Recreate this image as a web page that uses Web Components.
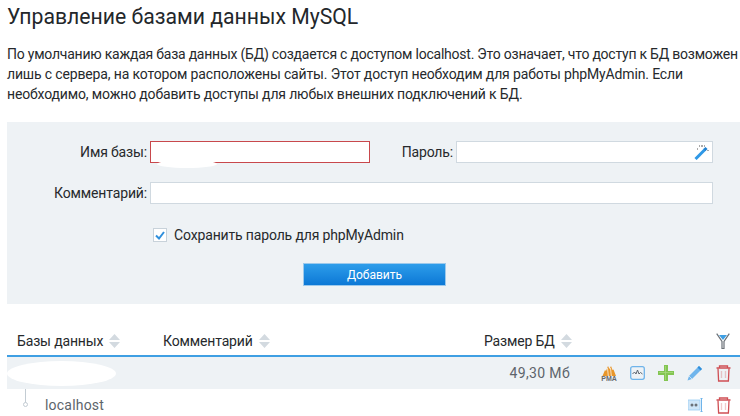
<!DOCTYPE html>
<html lang="ru">
<head>
<meta charset="utf-8">
<title>MySQL</title>
<style>
  html, body { margin: 0; padding: 0; background: #fff; overflow: hidden; }
  body { width: 740px; height: 416px; font: 14px/20px Roboto, "Noto Sans", sans-serif; letter-spacing: -0.15px; color: #26292c; }
  .tight { letter-spacing: -0.23px; }
</style>
</head>
<body>
<mysql-page>
  <page-intro heading="Управление базами данных MySQL"><span class="tight">По умолчанию каждая база данных (БД) создается с доступом localhost. Это означает, что доступ к БД возможен</span><br>лишь с сервера, на котором расположены сайты. Этот доступ необходим для работы phpMyAdmin. Если<br>необходимо, можно добавить доступы для любых внешних подключений к БД.</page-intro>
  <db-form></db-form>
  <db-table></db-table>
</mysql-page>

<script>
const TRASH = `<svg width="15" height="17" viewBox="0 0 15 17" fill="none" stroke="#cf4f54" stroke-width="1.300"><path d="M.5 3h14M3.500 3V1h8v2"/><path d="M2 3.500l.6 12.500h9.800l.6-12.500"/><path d="M5.500 6v7M9.500 6v7" stroke-opacity=".3"/></svg>`

const ICONS = {
  pma: `<svg width="16" height="15" viewBox="0 0 16 15"><path d="M1.500 10L4 4l1 1 2-5 1.500 3L10 0l1.500 4 1-.5L15 10z" fill="#e8962a"/><path d="M6.500 2l.8 8M9.500 2l.8 8" stroke="#fff" stroke-width=".7"/><text x="8" y="15" text-anchor="middle" font-family="Liberation Sans, sans-serif" font-size="7" font-weight="700" letter-spacing="0" fill="#66686b">PMA</text></svg>`,
  chart: `<svg width="15" height="14" viewBox="0 0 15 14" fill="none"><rect x=".7" y=".7" width="13.600" height="12.600" rx="2" stroke="#6fb4ea" stroke-width="1.300"/><path d="M2.500 8l2-2 1.500 2 1.500-4 1.500 4 1.500-1.500 2 1.500" stroke="#5d6670"/></svg>`,
  plus: `<svg width="16" height="16" viewBox="0 0 16 16"><path d="M6 0h4v6h6v4h-6v6H6v-6H0V6h6z" fill="#83c552"/><path d="M7.500 1v14M1 7.500h14" stroke="#a6d97e" stroke-width=".8"/></svg>`,
  pencil: `<svg width="16" height="16" viewBox="0 0 16 16"><path d="M12 1l3 3L5 14l-4.500 1.500L2 11z" fill="#70b5ec"/><path d="M12 1l3 3-1.500 1.500-3-3z" fill="#2f8fdc"/><path d="M2 11l3 3" stroke="#c4e0f6"/></svg>`,
  trash: TRASH,
  access: `<svg width="15" height="14" viewBox="0 0 15 14"><rect x="0" y="2" width="12" height="10" fill="#cfe6f8" stroke="#9bcdf2" stroke-width=".8"/><circle cx="4" cy="7" r="1.500" fill="#6b7178"/><circle cx="8" cy="7" r="1.500" fill="#6b7178"/><path d="M13.500 0v14M12.500 .5h2M12.500 13.500h2" stroke="#6fb4ea"/></svg>`
}

class MysqlPage extends HTMLElement {
  constructor() {
    super()
    this.attachShadow({ mode: 'open' })
    this.shadowRoot.innerHTML = `
      <style>
        :host { display: flex; flex-direction: column; width: 740px; height: 416px; overflow: hidden; }
        ::slotted(*) { flex: none; }
      </style>
      <slot></slot>`
  }
}

class PageIntro extends HTMLElement {
  constructor() {
    super()
    this.attachShadow({ mode: 'open' })
    this.shadowRoot.innerHTML = `
      <style>
        :host { display: block; padding: 2px 0 0 7px; height: 122px; box-sizing: border-box; }
        h1 { margin: 0 0 12px; font: 400 21.2px/30px Roboto, sans-serif; letter-spacing: 0; color: #23272b; white-space: nowrap; }
        p { margin: 0; font-size: 14px; line-height: 20px; white-space: nowrap; }
      </style>
      <h1>${this.getAttribute('heading')}</h1>
      <p><slot></slot></p>`
  }
}

class DbForm extends HTMLElement {
  constructor() {
    super()
    this.attachShadow({ mode: 'open' })
    this.shadowRoot.innerHTML = `
      <style>
        :host { display: block; margin-left: 7px; height: 182px; background: #eef2f5; padding-top: 19px; box-sizing: border-box; position: relative; }
        .grid { display: grid; grid-template-columns: 140px 220px 80px 257px; column-gap: 3px; row-gap: 19px; grid-auto-rows: 22px; align-items: center; width: 706px; }
        label { text-align: right; white-space: nowrap; }
        .input { height: 22px; box-sizing: border-box; background: #fff; border: 1px solid #d0d9e0; display: flex; justify-content: flex-end; align-items: center; padding-right: 2px; }
        .error { border-color: #c8484c; }
        .wide { grid-column: 2 / 5; }
        .check { display: flex; align-items: center; gap: 7px; margin: 24px 0 0 146px; height: 14px; }
        .box { width: 12px; height: 12px; border: 1px solid #c8d2da; background: #fff; display: flex; align-items: center; justify-content: center; flex: none; }
        button { display: block; margin: 21px 0 0 296px; width: 143px; height: 23px; padding: 0; border: 1px solid #9cc9ec; background: linear-gradient(#2d9dea, #0c78d6); color: #fff; font: 12px/20px Roboto, sans-serif; }
        .blot { position: absolute; left: 150px; top: 38px; width: 60px; height: 8px; border-radius: 50%; background: #fff; }
      </style>
      <div class="grid">
        <label>Имя базы:</label><div class="input error"></div>
        <label>Пароль:</label>
        <div class="input"><svg width="16" height="16" viewBox="0 0 16 16"><path d="M1.500 15L11 5.500" stroke="#2f98e6" stroke-width="3"/><path d="M10.500 6l2-2" stroke="#1f7fd0" stroke-width="3"/><path d="M5 2h1M8 1v2M3 5h1M14 6v1M10 2h1" stroke="#555" stroke-width="1"/></svg></div>
        <label>Комментарий:</label><div class="input wide"></div>
      </div>
      <div class="check">
        <span class="box"><svg width="10" height="9" viewBox="0 0 10 9" fill="none"><path d="M1 4.500l3 3L9 1" stroke="#2f8fdc" stroke-width="2"/></svg></span>
        <span>Сохранить пароль для phpMyAdmin</span>
      </div>
      <button type="button">Добавить</button>
      <div class="blot"></div>`
  }
}

class SortMark extends HTMLElement {
  constructor() {
    super()
    this.attachShadow({ mode: 'open' })
    this.shadowRoot.innerHTML = `
      <style>:host { display: inline-flex; margin-left: 6px; }</style>
      <svg width="11" height="14" viewBox="0 0 11 14" fill="#d3dae0"><path d="M5.500 0L11 6H0zM0 8h11l-5.500 6z"/></svg>`
  }
}

class DbTable extends HTMLElement {
  constructor() {
    super()
    this.attachShadow({ mode: 'open' })
    this.shadowRoot.innerHTML = `
      <style>
        :host { display: block; margin: 22px 0 0 7px; position: relative; }
        .head, .row { display: flex; align-items: center; }
        .head { height: 29px; padding-left: 10px; border-bottom: 2px solid #3f9fe3; white-space: nowrap; }
        .head span { display: inline-flex; align-items: center; }
        .c1 { width: 146px; }
        .c2 { width: 321px; }
        .c3 { width: 232px; }
        .row { height: 32px; }
        .db { background: #eef2f5; }
        .size { margin-left: 444px; width: 119px; text-align: right; color: #5d646b; letter-spacing: .35px; }
        .icons { display: flex; align-items: center; margin-left: auto; padding-right: 9px; gap: 13px; }
        .host { color: #5d646b; padding-left: 38px; letter-spacing: .2px; }
        .tree { position: absolute; left: 18px; top: 63px; width: 1px; height: 14px; background: #c3ccd3; }
        .dot { position: absolute; left: 16px; top: 76px; width: 3px; height: 3px; border: 1px solid #c3ccd3; border-radius: 50%; background: #fff; }
        .blot { position: absolute; left: 0; top: 35px; width: 109px; height: 25px; border-radius: 50%; background: #fff; }
      </style>
      <div class="head">
        <span class="c1">Базы данных<sort-mark></sort-mark></span>
        <span class="c2">Комментарий<sort-mark></sort-mark></span>
        <span class="c3">Размер БД<sort-mark></sort-mark></span>
        <svg width="14" height="16" viewBox="0 0 14 16" fill="none"><path d="M.7 .7L6 8.500V15.500h2V8.500L13.300 .7" stroke="#6b7178" stroke-width="1.200"/><path d="M3 2h8L7 7z" fill="#3f9fe3"/></svg>
      </div>
      <div class="row db">
        <span class="size">49,30 Мб</span>
        <div class="icons">${ICONS.pma}${ICONS.chart}${ICONS.plus}${ICONS.pencil}${ICONS.trash}</div>
      </div>
      <div class="row host">
        <span>localhost</span>
        <div class="icons">${ICONS.access}${ICONS.trash}</div>
      </div>
      <div class="tree"></div><div class="dot"></div><div class="blot"></div>`
  }
}

customElements.define('mysql-page', MysqlPage)
customElements.define('page-intro', PageIntro)
customElements.define('db-form', DbForm)
customElements.define('sort-mark', SortMark)
customElements.define('db-table', DbTable)
</script>
</body>
</html>
